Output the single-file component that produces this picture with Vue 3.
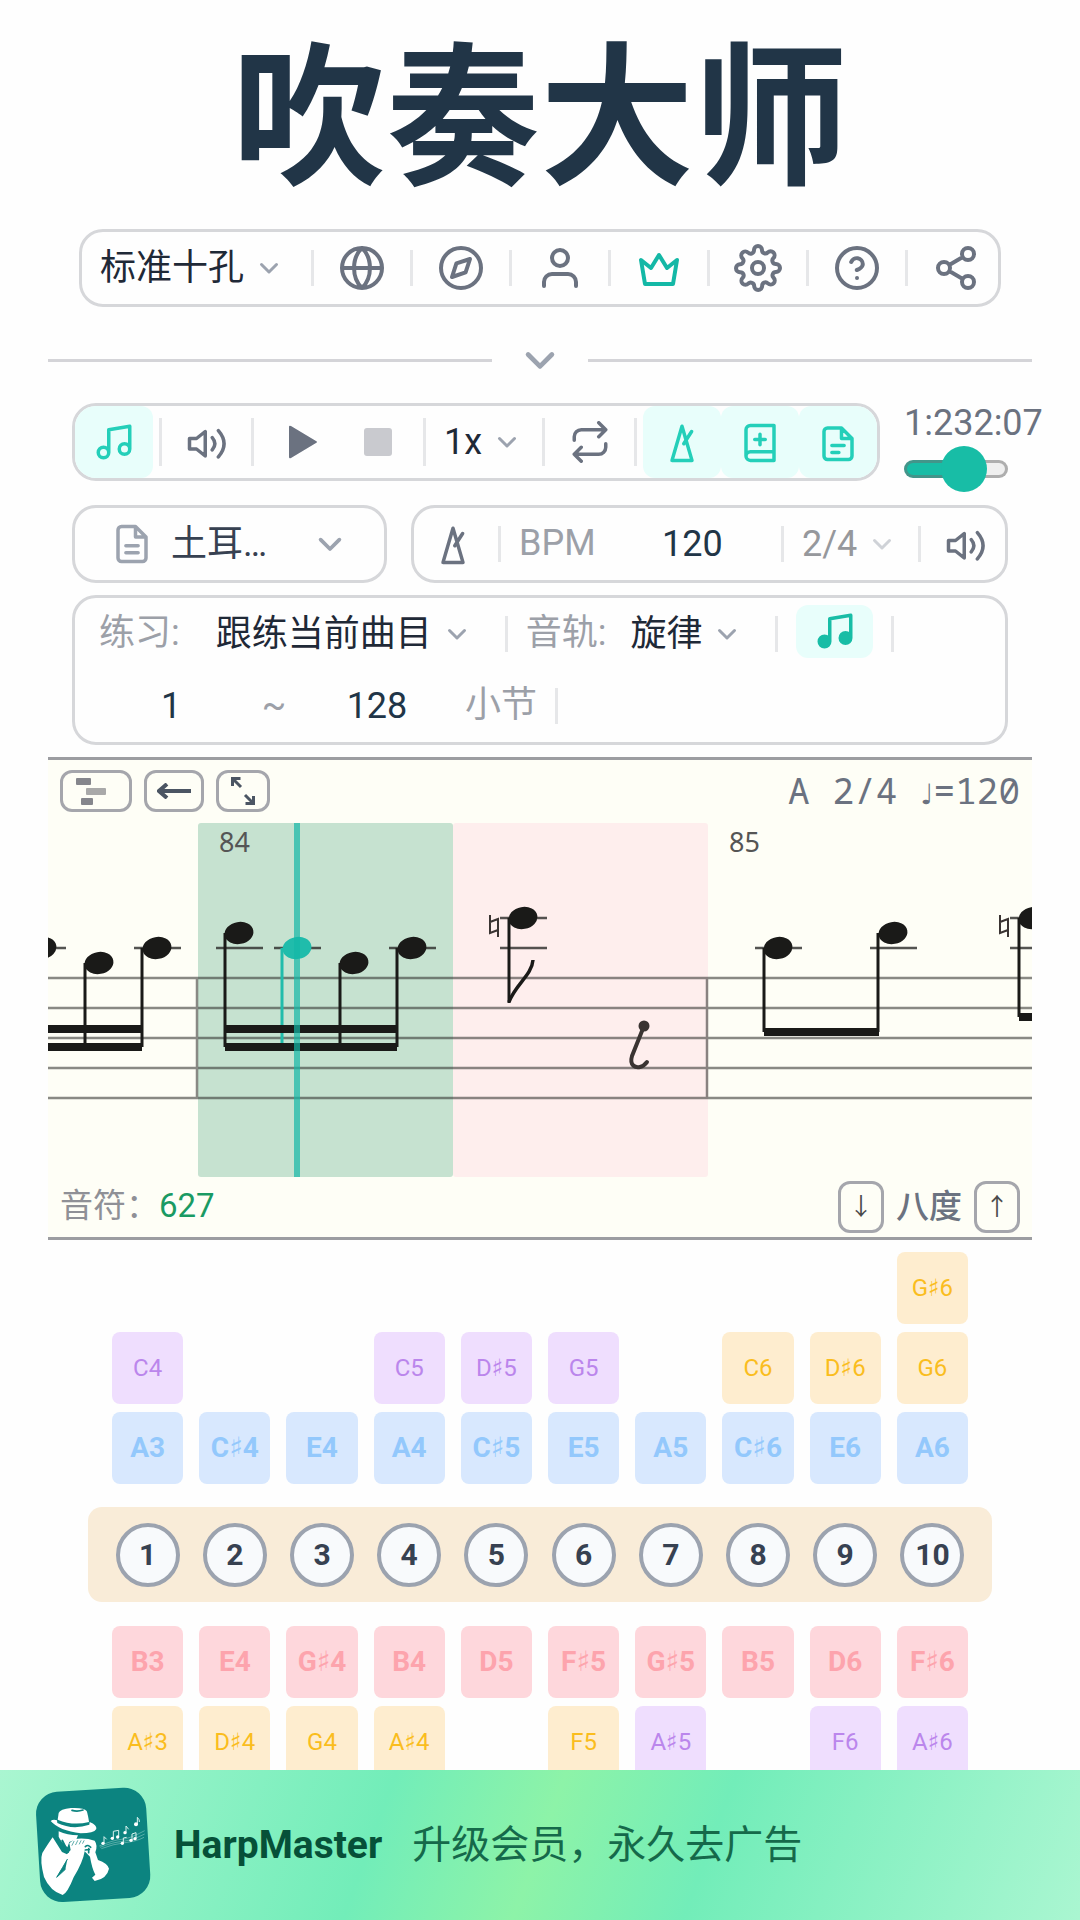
<template>
  <div class="page">
    <h1 class="title">吹奏大师</h1>

    <nav class="toolbar main-nav">
      <div class="picker nav-picker">
        <select v-model="harp" aria-label="口琴类型">
          <option>标准十孔</option>
        </select>
        <Icon name="chevron" class="chevron" />
      </div>
      <template v-for="item in navItems" :key="item.icon">
        <span class="sep"></span>
        <button type="button" class="nav-btn" :class="{ vip: item.icon === 'crown' }" :aria-label="item.label">
          <Icon :name="item.icon" class="nav-icon" />
        </button>
      </template>
    </nav>

    <div class="fold">
      <span class="fold-line"></span>
      <button type="button" class="fold-btn" aria-label="展开"><Icon name="chevron" class="fold-icon" /></button>
      <span class="fold-line"></span>
    </div>

    <section class="controls">
      <div class="row">
        <div class="toolbar player">
          <button type="button" class="tool-btn active" aria-label="音符"><Icon name="music" class="icon" /></button>
          <span class="sep tall after-active"></span>
          <button type="button" class="tool-btn wide" aria-label="声音"><Icon name="volume" class="icon" /></button>
          <span class="sep tall"></span>
          <div class="transport">
            <button type="button" class="tool-btn" aria-label="播放">
              <svg class="icon solid" viewBox="0 0 42 42"><path d="M10 6v30q0 2 2 1l25-15q2-1 0-2l-25-15q-2-1-2 1z" /></svg>
            </button>
            <button type="button" class="tool-btn" aria-label="停止" disabled>
              <svg class="icon stop" viewBox="0 0 42 42"><rect x="7" y="7" width="28" height="28" rx="3" /></svg>
            </button>
          </div>
          <span class="sep tall"></span>
          <div class="picker speed">
            <select v-model="speed" aria-label="速度">
              <option>1x</option>
            </select>
            <Icon name="chevron" class="chevron" />
          </div>
          <span class="sep tall"></span>
          <button type="button" class="tool-btn wide" aria-label="循环"><Icon name="repeat" class="icon" /></button>
          <span class="sep tall before-active"></span>
          <button type="button" class="tool-btn active" aria-label="节拍器"><Icon name="metronome" class="icon" /></button>
          <button type="button" class="tool-btn active" aria-label="曲谱本"><Icon name="book" class="icon" /></button>
          <button type="button" class="tool-btn active" aria-label="歌词"><Icon name="lyrics" class="icon" /></button>
        </div>
        <div class="progress">
          <label for="position" class="times"><span>1:23</span><span>2:07</span></label>
          <input id="position" v-model="position" type="range" min="0" max="127" class="slider" :style="{ '--fill': fill }">
        </div>
      </div>

      <div class="song-row">
        <div class="toolbar song">
          <Icon name="file" class="icon" />
          <select v-model="song" aria-label="曲目">
            <option>土耳…</option>
          </select>
          <Icon name="chevron" class="chevron big" />
        </div>
        <div class="toolbar tempo">
          <button type="button" class="plain-btn" aria-label="节拍器"><Icon name="metronome" class="icon" /></button>
          <span class="sep"></span>
          <label for="bpm" class="muted">BPM</label>
          <input id="bpm" v-model="bpm" type="text" class="number">
          <span class="sep"></span>
          <div class="picker meter">
            <select v-model="meter" aria-label="拍号" disabled>
              <option>2/4</option>
            </select>
            <Icon name="chevron" class="chevron" />
          </div>
          <span class="sep"></span>
          <button type="button" class="plain-btn last" aria-label="节拍音量"><Icon name="volume" class="icon" /></button>
        </div>
      </div>

      <div class="toolbar practice">
        <div class="practice-row">
          <label for="mode" class="muted">练习:</label>
          <div class="picker mode">
            <select id="mode" v-model="mode">
              <option>跟练当前曲目</option>
            </select>
            <Icon name="chevron" class="chevron" />
          </div>
          <span class="sep"></span>
          <label for="track" class="muted track-label">音轨:</label>
          <div class="picker track">
            <select id="track" v-model="track">
              <option>旋律</option>
            </select>
            <Icon name="chevron" class="chevron" />
          </div>
          <span class="sep"></span>
          <button type="button" class="track-btn" aria-label="旋律音轨"><Icon name="melody" class="icon filled" /></button>
          <span class="sep"></span>
        </div>
        <div class="practice-row range">
          <input v-model="from" type="text" class="number" aria-label="起始小节">
          <span class="muted tilde">~</span>
          <input id="to" v-model="to" type="text" class="number">
          <label for="to" class="muted unit">小节</label>
          <span class="sep"></span>
        </div>
      </div>
    </section>

    <section class="sheet">
      <header class="sheet-head">
        <button type="button" class="sheet-btn roll" aria-label="卷帘">
          <svg width="30" height="27" viewBox="0 0 30 27">
            <rect width="15" height="7" rx="1" fill="#85868c" />
            <rect x="10" y="10" width="20" height="7" rx="1" fill="#a9a9a9" />
            <rect x="5" y="20" width="12" height="7" rx="1" fill="#85868c" />
          </svg>
        </button>
        <button type="button" class="sheet-btn back" aria-label="方向">
          <svg class="thin" width="34" height="16" viewBox="0 0 34 16"><path d="M34 8H2M10 1L2 8l8 7" stroke-width="4" /></svg>
        </button>
        <button type="button" class="sheet-btn full" aria-label="全屏">
          <svg class="thin" width="24" height="28" viewBox="0 0 24 28"><path d="M1.500 9V1.500h8M2 2l8 8M22.500 19v7.500h-8M22 26l-8-8" stroke-width="3" /></svg>
        </button>
        <p class="sheet-meta"><span>A</span><span>2/4</span><span><i>♩</i>=120</span></p>
      </header>

      <svg class="score" viewBox="0 0 984 354">
        <rect x="150" width="255" height="354" rx="3" fill="#c6e2d0" />
        <rect x="405" width="255" height="354" rx="3" fill="#feeeed" />
        <path class="staff" d="M0 155h984M0 185h984M0 215h984M0 245h984M0 275h984M149 155v120M659 155v120" />
        <text x="171" y="29">84</text>
        <text x="681" y="29">85</text>

        <path v-for="(l, i) in ledgers" :key="'l' + i" class="ledger" :d="`M${l[0] - 23} ${l[1]}h47`" />
        <path v-for="(s, i) in stems" :key="'s' + i" class="stem" :class="{ now: s[3] }" :d="`M${s[0]} ${s[1]}V${s[2]}`" />
        <rect v-for="(b, i) in beams" :key="'b' + i" class="ink" :x="b[0]" :y="b[1]" :width="b[2]" height="8" />
        <ellipse
          v-for="(n, i) in notes" :key="'n' + i" class="ink" :class="{ now: n[2] }"
          rx="14.500" ry="11" :transform="`translate(${n[0]} ${n[1]}) rotate(-10)`"
        />
        <path v-for="x in naturals" :key="x" class="natural" :d="`M${x} 92v18l8-3M${x} 99l8-3v18`" />

        <!-- eighth flag and eighth rest -->
        <path class="flag" d="M461 179C467 162 484 152 485 137" />
        <circle cx="596" cy="203" r="5.500" fill="#3a3432" />
        <path class="rest" d="M596 203L584 233C581 243 588 245 592 244Q596 243 599 239" />
        <rect class="cursor" x="246" width="6" height="354" />
      </svg>

      <footer class="sheet-foot">
        <p class="count">音符：<b>627</b></p>
        <div class="octave">
          <button type="button" aria-label="降低八度">↓</button>
          <span>八度</span>
          <button type="button" aria-label="升高八度">↑</button>
        </div>
      </footer>
    </section>

    <section class="harp">
      <div v-for="(row, i) in drawRows" :key="'d' + i" class="harp-row">
        <span v-for="(c, j) in row" :key="j" class="cell" :class="c && c[1]">{{ c && c[0] }}</span>
      </div>
      <div class="holes">
        <span v-for="n in 10" :key="n" class="hole-slot"><span class="hole">{{ n }}</span></span>
      </div>
      <div v-for="(row, i) in blowRows" :key="'b' + i" class="harp-row">
        <span v-for="(c, j) in row" :key="j" class="cell" :class="c && c[1]">{{ c && c[0] }}</span>
      </div>
    </section>

    <a href="#" class="banner">
      <svg class="logo" viewBox="0 0 375 390">
        <rect x="24" y="29" width="331" height="331" rx="66" transform="rotate(-3.500 190 195)" fill="#0c8480" />
        <g fill="#fff">
          <path d="M83 119L86 99Q90 87 123 84Q162 82 170 93Q174 104 177 126Q128 138 83 119Z" />
          <path d="M62 123Q70 116 81 121L82 129Q128 151 178 134L179 126Q201 135 199 147Q192 160 152 160Q88 152 62 123Z" />
          <path d="M86 154Q112 166 144 166L139 178L118 186L112 202Q92 184 86 170Z" />
          <path d="M118 190L134 177Q168 173 194 182Q204 196 196 217L204 240Q233 250 237 266Q231 296 194 303L186 293L196 284Q186 266 180 230L164 214Q159 246 131 292Q112 340 98 345Q60 333 42 291Q29 240 37 219Q57 187 68 172L96 216L111 223L122 210Z" />
        </g>
        <g fill="none" stroke="#0c8480" stroke-linecap="round">
          <path d="M97 182L114 216" stroke-width="6" />
          <path d="M112 238L98 262L80 292L106 268" stroke-width="3" fill="#0c8480" />
          <path d="M126 196l6-12M137 194l6-12M148 192l5-10M158 190l4-8" stroke-width="2" />
          <path d="M166 200q8-8 16 2M166 210l12-2M176 206v12" stroke-width="5" />
          <path d="M126 91q16 5 33-1" stroke-width="5" />
        </g>
        <g fill="none" stroke="#d9f3ef" stroke-width="2">
          <path d="M208 198Q250 180 275 178T344 152M210 202Q250 186 280 184T344 162M214 206Q250 192 285 188T342 172" opacity=".55" />
          <path d="M222 190v-20l8 8M250 174v-20l16-3v20M288 158v-20l8 10M322 132v-20q8 8 6 14M280 190v-16l10-2M306 180v-18l12-4v18" stroke-width="3" />
        </g>
        <g fill="#fff">
          <circle cx="219" cy="190" r="5" /><circle cx="247" cy="175" r="5" /><circle cx="263" cy="171" r="5" />
          <circle cx="285" cy="158" r="5" /><circle cx="318" cy="133" r="6" /><circle cx="277" cy="190" r="5" />
          <circle cx="303" cy="181" r="5" /><circle cx="315" cy="176" r="5" />
        </g>
      </svg>
      <strong>HarpMaster</strong>
      <span>升级会员，永久去广告</span>
    </a>
  </div>
</template>

<script setup>
import { computed, h, ref } from 'vue'

// 24x24 的线条图标
const paths = {
  chevron: 'M4.5 8.5l7.5 7.5 7.5-7.5',
  globe: 'M2 12a10 10 0 1 0 20 0a10 10 0 1 0-20 0M2 12h20M12 2c5.300 5 5.300 15 0 20c-5.300-5-5.300-15 0-20',
  compass: 'M2 12a10 10 0 1 0 20 0a10 10 0 1 0-20 0M16.500 7.500l-2.200 6.700-6.800 2.300 2.200-6.800z',
  user: 'M20 21v-2a4 4 0 0 0-4-4H8a4 4 0 0 0-4 4v2M8 7a4 4 0 1 0 8 0a4 4 0 1 0-8 0',
  crown: 'M3 8l2 12h14l2-12-5 4-4-6.500-4 6.500z',
  gear: 'M9 12a3 3 0 1 0 6 0a3 3 0 1 0-6 0M19.400 15a1.650 1.650 0 0 0 .33 1.820l.06.06a2 2 0 0 1-2.830 2.830l-.06-.06a1.650 1.650 0 0 0-1.820-.33 1.650 1.650 0 0 0-1 1.510V21a2 2 0 0 1-4 0v-.09A1.650 1.650 0 0 0 9 19.400a1.650 1.650 0 0 0-1.820.33l-.06.06a2 2 0 0 1-2.830-2.830l.06-.06a1.650 1.650 0 0 0 .33-1.820 1.650 1.650 0 0 0-1.510-1H3a2 2 0 0 1 0-4h.09A1.650 1.650 0 0 0 4.600 9a1.650 1.650 0 0 0-.33-1.820l-.06-.06a2 2 0 0 1 2.830-2.830l.06.06a1.650 1.650 0 0 0 1.820.33H9a1.650 1.650 0 0 0 1-1.510V3a2 2 0 0 1 4 0v.09a1.650 1.650 0 0 0 1 1.510 1.650 1.650 0 0 0 1.820-.33l.06-.06a2 2 0 0 1 2.830 2.830l-.06.06a1.650 1.650 0 0 0-.33 1.820V9a1.650 1.650 0 0 0 1.510 1H21a2 2 0 0 1 0 4h-.09a1.650 1.650 0 0 0-1.510 1z',
  help: 'M2 12a10 10 0 1 0 20 0a10 10 0 1 0-20 0M9.100 9a3 3 0 0 1 5.800 1c0 2-3 3-3 3M12 17h.01',
  share: 'M15 5a3 3 0 1 0 6 0a3 3 0 1 0-6 0M3 12a3 3 0 1 0 6 0a3 3 0 1 0-6 0M15 19a3 3 0 1 0 6 0a3 3 0 1 0-6 0M8.600 13.500l6.800 4M15.400 6.500l-6.800 4',
  music: 'M9 18V5l12-2v13M3 18a3 3 0 1 0 6 0a3 3 0 1 0-6 0M15 16a3 3 0 1 0 6 0a3 3 0 1 0-6 0',
  // 各段分开, 填充时只有符头是实心
  melody: 'M9 18V5M9 5l12-2M21 3v13M3 18a3 3 0 1 0 6 0a3 3 0 1 0-6 0M15 16a3 3 0 1 0 6 0a3 3 0 1 0-6 0',
  volume: 'M2 10h4l5-4v14l-5-4H2zM15 9.500q3 3.500 0 7M18.500 5.500q6.500 7.500 0 15',
  repeat: 'M17 1l4 4-4 4M3 11V9a4 4 0 0 1 4-4h14M7 23l-4-4 4-4M21 13v2a4 4 0 0 1-4 4H3',
  metronome: 'M12 3L6.300 22.500h11.400zM13 13l4.500-7',
  book: 'M4 20V5a2.500 2.500 0 0 1 2.500-2.500H20v20H6.500a2.500 2.500 0 0 1 0-5H20M12 7.500v6M9 10.500h6',
  lyrics: 'M14 4H6a2 2 0 0 0-2 2v14a2 2 0 0 0 2 2h12a2 2 0 0 0 2-2V10zM14 4v6h6M8.500 14h7M8.500 18h4',
  file: 'M14 2H6a2 2 0 0 0-2 2v16a2 2 0 0 0 2 2h12a2 2 0 0 0 2-2V8zM14 2v6h6M8.500 13h7M8.500 17h7',
}

const Icon = (props) => h('svg', { viewBox: '0 0 24 24' }, [h('path', { d: paths[props.name] })])

const navItems = [
  { icon: 'globe', label: '语言' },
  { icon: 'compass', label: '发现' },
  { icon: 'user', label: '账户' },
  { icon: 'crown', label: '会员' },
  { icon: 'gear', label: '设置' },
  { icon: 'help', label: '帮助' },
  { icon: 'share', label: '分享' },
]

const harp = ref('标准十孔')
const speed = ref('1x')
const song = ref('土耳…')
const meter = ref('2/4')
const mode = ref('跟练当前曲目')
const track = ref('旋律')
const bpm = ref('120')
const from = ref('1')
const to = ref('128')
const position = ref(83)
const fill = computed(() => `${(position.value / 127) * 100}%`)

// 五线谱: [x, y, 是否当前音]
const notes = [
  [-6, 125], [51, 140], [109, 125],
  [191, 110], [249, 125, true], [306, 140], [364, 125],
  [475, 95], [730, 125], [845, 110], [985, 95],
]
const ledgers = [
  [-6, 125], [109, 125], [191, 125], [249, 125], [364, 125],
  [475, 95], [475, 125], [730, 125], [845, 125], [985, 95], [985, 125],
]
const stems = [
  [37, 140, 222], [94, 125, 224],
  [177, 110, 224], [234, 125, 221, true], [292, 140, 222], [349, 125, 224],
  [461, 95, 180], [716, 125, 209], [830, 110, 209], [971, 95, 194],
]
const beams = [
  [0, 202, 94], [0, 220, 94], [177, 202, 172], [177, 220, 172], [716, 205, 115], [971, 190, 20],
]
const naturals = [442, 952]

// 把一行音名变成格子
const line = (names, kinds) => names.split(' ').map((n, i) => (n === '-' ? null : [n, kinds[i] || kinds[0]]))
const p = 'overblow'
const y = 'bend'
const drawRows = [
  line('- - - - - - - - - G♯6', [y]),
  line('C4 - - C5 D♯5 G5 - C6 D♯6 G6', [p, p, p, p, p, p, p, y, y, y]),
  line('A3 C♯4 E4 A4 C♯5 E5 A5 C♯6 E6 A6', ['blow']),
]
const blowRows = [
  line('B3 E4 G♯4 B4 D5 F♯5 G♯5 B5 D6 F♯6', ['draw']),
  line('A♯3 D♯4 G4 A♯4 - F5 A♯5 - F6 A♯6', [y, y, y, y, y, y, p, p, p, p]),
]
</script>

<style>
body {
  background: #fefefe;
}
</style>

<style scoped>
.page {
  padding: 0 48px 150px;
  font-family: Roboto, "Noto Sans CJK SC", sans-serif;
  font-size: 36px;
  line-height: 1.2;
  color: #1f2937;
}

.title {
  margin: 0;
  padding: 29px 0 16px;
  font-size: 154px;
  line-height: 184px;
  font-weight: 700;
  text-align: center;
  color: #213547;
}

button,
select,
input {
  box-sizing: border-box;
  margin: 0;
  padding: 0;
  border: 0;
  background: none;
  font: inherit;
  color: inherit;
}

button {
  display: flex;
  align-items: center;
  justify-content: center;
  color: #6b7280;
}

select {
  appearance: none;
  line-height: 48px;
  opacity: 1;
}

svg {
  display: block;
  flex: none;
}

.icon,
.nav-icon,
.fold-icon,
.chevron {
  width: 42px;
  height: 42px;
  fill: none;
  stroke: currentColor;
  stroke-width: 2;
  stroke-linecap: round;
  stroke-linejoin: round;
}

.nav-icon {
  width: 48px;
  height: 48px;
}

.chevron {
  width: 24px;
  height: 24px;
  color: #9ca3af;
  stroke-width: 3;
  pointer-events: none;
}

.chevron.big {
  width: 30px;
  height: 30px;
  margin-left: auto;
}

.toolbar {
  box-sizing: border-box;
  display: flex;
  align-items: center;
  height: 78px;
  border: 3px solid #d6d7da;
  border-radius: 24px;
}

.sep {
  flex: none;
  width: 3px;
  height: 36px;
  background: #e6e7e9;
}

.sep.tall {
  height: 48px;
}

.picker {
  display: flex;
  align-items: center;
  gap: 12px;
}

.muted {
  color: #9ca0a8;
}

/* 顶部导航 */
.main-nav {
  width: fit-content;
  margin: 0 auto;
}

.nav-picker {
  padding: 0 30px 0 18px;
}

.nav-btn {
  padding: 0 24px;
}

.nav-btn:last-child {
  padding-right: 18px;
}

.vip {
  color: #14b8a6;
}

.fold {
  display: flex;
  align-items: center;
  height: 36px;
  margin: 35px 0 25px;
}

.fold-line {
  flex: 1;
  height: 3px;
  background: #d4d4d8;
}

.fold-btn {
  width: 96px;
  color: #9ca3af;
}

.fold-icon {
  width: 38px;
  height: 38px;
  stroke-width: 3;
}

/* 播放控制 */
.controls {
  padding: 0 24px;
}

.row {
  display: flex;
  gap: 24px;
}

.player {
  flex: none;
  overflow: hidden;
}

.tool-btn {
  width: 78px;
  height: 72px;
}

.tool-btn.wide {
  width: 89px;
}

.tool-btn.active {
  border-radius: 12px;
  background: #e8fefb;
  color: #24cfb9;
}

.after-active {
  margin-left: 6px;
}

.before-active {
  margin-right: 6px;
}

.transport {
  display: flex;
  padding: 0 6px 0 7px;
}

.icon.solid {
  fill: #6b7280;
  stroke: none;
}

.icon.stop {
  fill: #c9cacf;
  stroke: none;
}

.speed {
  padding: 0 23px 0 18px;
}

.progress {
  flex: 1;
  min-width: 0;
}

.times {
  display: flex;
  line-height: 40px;
  color: #6b7280;
}

.slider {
  display: block;
  width: 100%;
  height: 18px;
  margin-top: 17px;
  appearance: none;
}

.slider::-webkit-slider-runnable-track {
  box-sizing: border-box;
  height: 18px;
  border: 3px solid rgba(110, 110, 110, 0.5);
  border-radius: 9px;
  background: linear-gradient(to right, #18bda6 var(--fill), #efefef var(--fill)) border-box;
}

.slider::-webkit-slider-thumb {
  width: 46px;
  height: 46px;
  margin-top: -17px;
  border-radius: 50%;
  background: #18bda6;
  appearance: none;
}

.song-row {
  display: grid;
  grid-template-columns: 315fr 597fr;
  gap: 24px;
  margin: 24px 0 12px;
}

.song {
  gap: 18px;
  padding: 0 39px 0 36px;
  color: #9ca3af;
}

.song select {
  color: #374151;
}

.tempo {
  padding: 0 18px;
}

.plain-btn {
  margin-right: 24px;
}

.plain-btn.last {
  margin: 0 0 0 24px;
}

.tempo .muted {
  margin-left: 18px;
}

.number {
  width: 140px;
  height: 48px;
  text-align: center;
  color: #213547;
  outline: none;
}

.tempo .number {
  flex: 1;
  min-width: 0;
  margin-left: 8px;
}

.meter {
  padding: 0 24px 0 18px;
  color: #96989c;
}

.meter .chevron {
  color: #cfd2d7;
}

/* 练习设置 */
.practice {
  display: block;
  height: auto;
  margin-bottom: 12px;
}

.practice-row {
  display: flex;
  align-items: center;
  height: 72px;
  padding-left: 24px;
}

.practice-row.range {
  padding-left: 26px;
}

.mode {
  padding: 0 36px;
}

.track-label {
  margin-left: 18px;
}

.track {
  padding: 0 36px 0 24px;
}

.track-btn {
  width: 77px;
  height: 53px;
  margin: 0 18px 6px;
  border-radius: 12px;
  background: #e8fefb;
  color: #18bda6;
}

.icon.filled {
  fill: currentColor;
}

.tilde {
  width: 66px;
  text-align: center;
}

.unit {
  margin: 0 18px;
}

/* 曲谱 */
.sheet {
  border: solid #9c9da1;
  border-width: 3px 0;
  background: #fefef6;
}

.sheet-head {
  display: flex;
  gap: 12px;
  padding: 10px 12px 11px;
}

.sheet-btn {
  height: 42px;
  border: 3px solid #a5a6ac;
  border-radius: 12px;
}

.roll {
  width: 72px;
  padding-right: 10px;
}

.back {
  width: 60px;
}

.full {
  width: 54px;
}

.thin {
  fill: none;
  stroke: #4b5563;
}

.sheet-meta {
  display: flex;
  gap: 23px;
  height: 42px;
  margin: 0 0 0 auto;
  font-family: "Noto Sans Mono", "Noto Sans", "DejaVu Sans", sans-serif;
  line-height: 42px;
  color: #6b7280;
}

.sheet-meta i {
  font-size: 28px;
  font-style: normal;
  line-height: 1;
}

.score {
  width: 100%;
  height: auto;
  overflow: hidden;
}

.score text {
  font-family: "Noto Sans", sans-serif;
  font-size: 27px;
  fill: #555;
}

.staff,
.ledger {
  stroke: #2a2a28;
  stroke-width: 2.5;
  opacity: 0.55;
}

.ledger {
  opacity: 0.8;
}

.ink {
  fill: #1a1a18;
}

.ink.now {
  fill: #20bcab;
}

.stem {
  stroke: #1a1a18;
  stroke-width: 3;
}

.stem.now {
  stroke: #20bcab;
}

.natural,
.flag,
.rest {
  fill: none;
  stroke: #3a3432;
  stroke-width: 2;
}

.flag {
  stroke: #1a1a18;
  stroke-width: 3.5;
}

.rest {
  stroke-width: 4;
  stroke-linecap: round;
}

.cursor {
  fill: #14b8a6;
  opacity: 0.7;
}

.sheet-foot {
  display: flex;
  align-items: center;
  justify-content: space-between;
  padding: 4px 12px;
  font-size: 33px;
  color: #6b7280;
}

.count {
  margin: 0;
  padding-bottom: 2px;
  color: #8f9096;
}

.count b {
  font-weight: 400;
  color: #1a9a63;
}

.octave {
  display: flex;
  align-items: center;
  gap: 12px;
  font-weight: 500;
}

.octave button {
  width: 46px;
  height: 52px;
  border: 3px solid #a5a6ac;
  border-radius: 12px;
  font-size: 24px;
  font-weight: 400;
  color: #4b4b4b;
}

/* 口琴音位 */
.harp {
  display: grid;
  gap: 8px;
  padding: 12px 40px 0;
}

.harp-row,
.holes {
  display: grid;
  grid-template-columns: repeat(10, minmax(0, 1fr));
  gap: 16px;
  padding: 0 24px;
}

.cell {
  display: flex;
  align-items: center;
  justify-content: center;
  height: 72px;
  border-radius: 8px;
  font-family: Roboto, "DejaVu Sans", sans-serif;
  font-size: 24px;
}

.blow,
.draw {
  font-size: 28px;
  font-weight: 700;
}

.blow {
  background: #d8e8fe;
  color: #93c8fc;
}

.draw {
  background: #fed7dc;
  color: #fda4ad;
}

.overblow {
  background: #efdefe;
  color: #bb86ec;
}

.bend {
  background: #feedcf;
  color: #fabd1e;
}

.holes {
  height: 95px;
  margin: 15px 0 16px;
  align-items: center;
  border-radius: 14px;
  background: #f9ecd8;
}

.hole-slot {
  display: flex;
  justify-content: center;
}

.hole {
  box-sizing: border-box;
  flex: none;
  width: 64px;
  height: 64px;
  border: 4px solid #9ca3af;
  border-radius: 50%;
  background: #f8fafc;
  font-size: 30px;
  line-height: 56px;
  font-weight: 700;
  text-align: center;
  color: #374151;
}

.banner {
  position: fixed;
  right: 0;
  bottom: 0;
  left: 0;
  display: flex;
  align-items: center;
  height: 150px;
  padding-left: 30px;
  background: linear-gradient(110deg, #aaf6d1 0%, #72edb9 35%, #8df3a8 50%, #72edb9 65%, #aaf6d1 100%);
  font-size: 39px;
  text-decoration: none;
  color: #15694a;
}

.logo {
  width: 125px;
  height: 130px;
  margin-right: 19px;
}

.banner strong {
  margin-right: 30px;
  color: #065038;
}
</style>
